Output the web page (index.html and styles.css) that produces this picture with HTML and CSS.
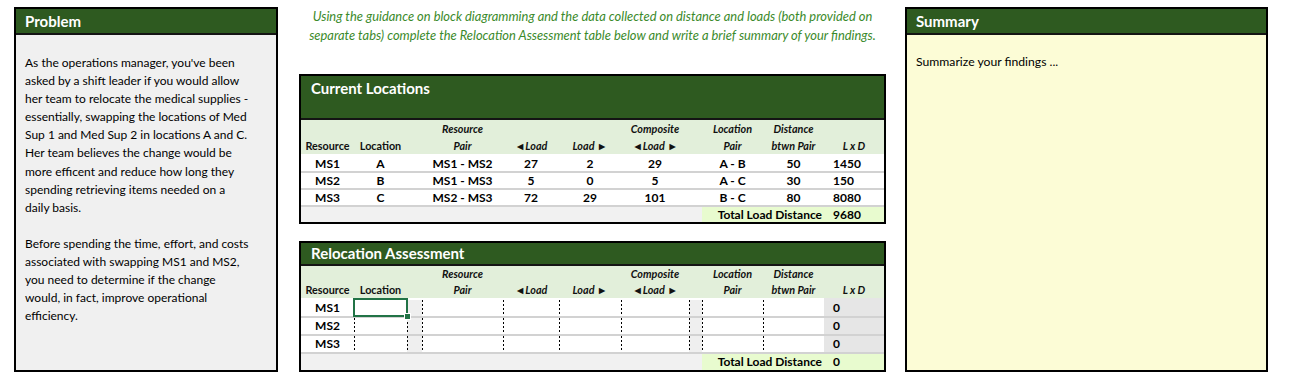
FILE: index.html
```html
<!DOCTYPE html>
<html>
<head>
<meta charset="utf-8">
<link rel="stylesheet" href="styles.css">
</head>
<body>
<div class="page">
  <section class="panel problem">
    <div class="panel-head">Problem</div>
    <div class="panel-body">
      <p>As the operations manager, you've been<br>asked by a shift leader if you would allow<br>her team to relocate the medical supplies -<br>essentially, swapping the locations of Med<br>Sup 1 and Med Sup 2 in locations A and C.<br>Her team believes the change would be<br>more efficent and reduce how long they<br>spending retrieving items needed on a<br>daily basis.</p>
      <p>Before spending the time, effort, and costs<br>associated with swapping MS1 and MS2,<br>you need to determine if the change<br>would, in fact, improve operational<br>efficiency.</p>
    </div>
  </section>

  <main class="middle">
    <p class="guide">Using the guidance on block diagramming and the data collected on distance and loads (both provided on<br>separate tabs) complete the Relocation Assessment table below and write a brief summary of your findings.</p>

    <div class="tbl current">
      <div class="tbl-title tall">Current Locations</div>
      <table class="grid">
        <colgroup>
          <col class="c-res"><col class="c-loc"><col class="c-gap1"><col class="c-pair"><col class="c-lload"><col class="c-rload"><col class="c-comp"><col class="c-gap2"><col class="c-lpair"><col class="c-dist"><col class="c-lxd">
        </colgroup>
        <thead>
          <tr>
            <th>Resource</th><th>Location</th><th></th>
            <th class="it">Resource<br>Pair</th>
            <th class="it">◄Load</th>
            <th class="it">Load ►</th>
            <th class="it">Composite<br>◄Load ►</th>
            <th></th>
            <th class="it">Location<br>Pair</th>
            <th class="it">Distance<br>btwn Pair</th>
            <th class="it">L x D</th>
          </tr>
        </thead>
        <tbody>
          <tr class="first"><td>MS1</td><td>A</td><td></td><td>MS1 - MS2</td><td>27</td><td>2</td><td>29</td><td></td><td>A - B</td><td>50</td><td class="lxd">1450</td></tr>
          <tr><td>MS2</td><td>B</td><td></td><td>MS1 - MS3</td><td>5</td><td>0</td><td>5</td><td></td><td>A - C</td><td>30</td><td class="lxd">150</td></tr>
          <tr><td>MS3</td><td>C</td><td></td><td>MS2 - MS3</td><td>72</td><td>29</td><td>101</td><td></td><td>B - C</td><td>80</td><td class="lxd">8080</td></tr>
          <tr class="foot"><td colspan="8"></td><td colspan="2" class="total">Total Load Distance</td><td class="lxd totalval">9680</td></tr>
        </tbody>
      </table>
    </div>

    <div class="tbl reloc">
      <div class="tbl-title">Relocation Assessment</div>
      <table class="grid">
        <colgroup>
          <col class="c-res"><col class="c-loc"><col class="c-gap1"><col class="c-pair"><col class="c-lload"><col class="c-rload"><col class="c-comp"><col class="c-gap2"><col class="c-lpair"><col class="c-dist"><col class="c-lxd">
        </colgroup>
        <thead>
          <tr>
            <th>Resource</th><th>Location</th><th></th>
            <th class="it">Resource<br>Pair</th>
            <th class="it">◄Load</th>
            <th class="it">Load ►</th>
            <th class="it">Composite<br>◄Load ►</th>
            <th></th>
            <th class="it">Location<br>Pair</th>
            <th class="it">Distance<br>btwn Pair</th>
            <th class="it">L x D</th>
          </tr>
        </thead>
        <tbody>
          <tr class="first"><td>MS1</td><td class="dot selcell"><span class="sel"></span></td><td class="dot gap"></td><td class="dot"></td><td class="dot"></td><td class="dot"></td><td class="dot"></td><td class="dot gap"></td><td class="dot"></td><td class="dot"></td><td class="lxd calc">0</td></tr>
          <tr><td>MS2</td><td class="dot"></td><td class="dot gap"></td><td class="dot"></td><td class="dot"></td><td class="dot"></td><td class="dot"></td><td class="dot gap"></td><td class="dot"></td><td class="dot"></td><td class="lxd calc">0</td></tr>
          <tr><td>MS3</td><td class="dot"></td><td class="dot gap"></td><td class="dot"></td><td class="dot"></td><td class="dot"></td><td class="dot"></td><td class="dot gap"></td><td class="dot"></td><td class="dot"></td><td class="lxd calc">0</td></tr>
          <tr class="foot"><td colspan="8"></td><td colspan="2" class="total">Total Load Distance</td><td class="lxd totalval">0</td></tr>
        </tbody>
      </table>
    </div>
  </main>

  <section class="panel summary">
    <div class="panel-head">Summary</div>
    <div class="panel-body">
      <p>Summarize your findings ...</p>
    </div>
  </section>
</div>
</body>
</html>
```

FILE: styles.css
```css
html, body {
  margin: 0;
  padding: 0;
  background: #ffffff;
}

body {
  font-family: "Lato", "Open Sans", sans-serif;
  color: #000;
}

.page {
  display: flex;
  align-items: flex-start;
  padding: 7px 0 0 14px;
}

/* side panels */
.panel {
  box-sizing: border-box;
  height: 365px;
  border: 2px solid #000;
}

.problem {
  width: 264px;
  background: #f0f0f0;
}

.summary {
  width: 363px;
  margin-left: 19px;
  background: #fcfcd6;
}

.panel-head {
  height: 24px;
  line-height: 24px;
  background: #2e5a20;
  border-bottom: 2px solid #141414;
  color: #fff;
  font-weight: 700;
  font-size: 15px;
  padding-left: 9px;
}

.panel-body {
  padding: 19px 4px 0 9px;
  font-size: 12px;
  line-height: 18.1px;
}

.panel-body p {
  margin: 0 0 18.1px 0;
  white-space: nowrap;
}

.summary .panel-body {
  padding-top: 18px;
  font-size: 12.2px;
}

/* middle column */
.middle {
  width: 587px;
  margin-left: 21px;
}

.guide {
  margin: 0 0 29px 0;
  text-align: center;
  font-style: italic;
  color: #3b8a2b;
  font-size: 12.9px;
  line-height: 19px;
  white-space: nowrap;
}

.tbl {
  box-sizing: border-box;
  width: 587px;
  border: 2px solid #000;
}

.reloc {
  margin-top: 17px;
}

.tbl-title {
  height: 21px;
  line-height: 21px;
  background: #2e5a20;
  border-bottom: 2px solid #141414;
  color: #fff;
  font-weight: 700;
  font-size: 15px;
  padding-left: 10px;
}

.tbl-title.tall {
  height: 42px;
  line-height: 24px;
}

.grid {
  width: 583px;
  table-layout: fixed;
  border-collapse: separate;
  border-spacing: 0;
}

.c-res { width: 53px; }
.c-loc { width: 53px; }
.c-gap1 { width: 15px; }
.c-pair { width: 81px; }
.c-lload { width: 56px; }
.c-rload { width: 62px; }
.c-comp { width: 68px; }
.c-gap2 { width: 13px; }
.c-lpair { width: 61px; }
.c-dist { width: 61px; }
.c-lxd { width: 60px; }

.grid th {
  background: #e2efda;
  font-size: 10.8px;
  font-weight: 700;
  line-height: 17px;
  padding: 0;
  text-align: center;
  vertical-align: bottom;
  white-space: nowrap;
  color: #111;
}

.reloc .grid th {
  line-height: 16px;
}

.grid th.it {
  font-style: italic;
}

.grid td {
  padding: 0;
  height: 15px;
  line-height: 15px;
  font-size: 12px;
  font-weight: 700;
  text-align: center;
  white-space: nowrap;
  border-top: 2px solid #d2d2d2;
  background-color: #fff;
}

.reloc .grid td {
  height: 16px;
  line-height: 16px;
}

.grid tr.first td {
  border-top-color: #fff;
}

.grid td.lxd {
  text-align: left;
  padding-left: 9px;
}

.grid td.calc {
  background-color: #e6e6e6;
}

.grid tr.first td.calc {
  border-top-color: #e6e6e6;
}

.grid tr.foot td {
  background-color: #f1f1f1;
}

.grid tr.foot td.total,
.grid tr.foot td.totalval {
  background-color: #e8fbcf;
}

.grid td.total {
  text-align: right;
  padding-right: 2px;
}

.grid td.dot {
  background-image: repeating-linear-gradient(to bottom, #000 0, #000 2px, transparent 2px, transparent 4px);
  background-size: 1px 100%;
  background-repeat: no-repeat;
  background-position: left top;
}

.grid td.gap {
  background-color: #efefef;
}

.grid tr.first td.gap {
  border-top-color: #fff;
}

.grid td.selcell {
  position: relative;
}

.sel {
  position: absolute;
  left: -1px;
  top: -2px;
  right: -1px;
  bottom: -1px;
  border: 2px solid #217346;
}

.sel::after {
  content: "";
  position: absolute;
  right: -5px;
  bottom: -5px;
  width: 5px;
  height: 5px;
  background: #217346;
  border: 1px solid #fff;
}
```
